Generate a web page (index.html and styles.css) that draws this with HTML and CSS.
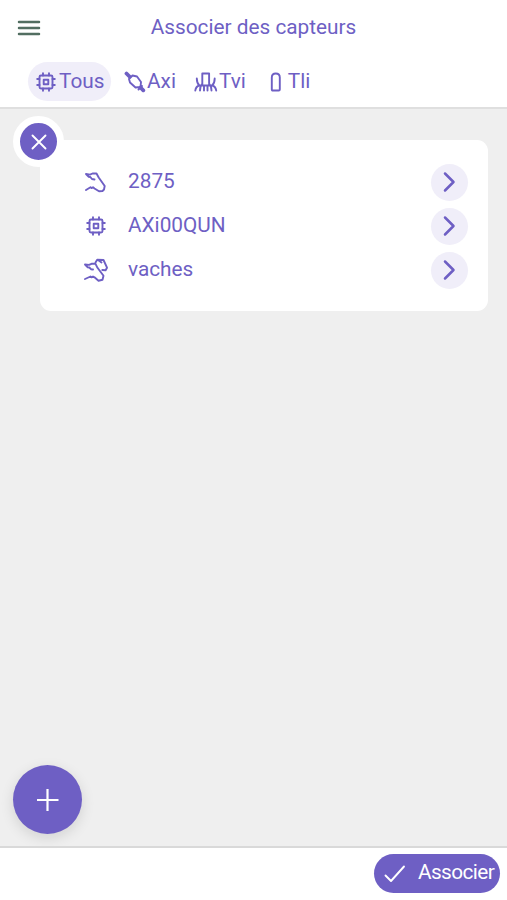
FILE: index.html
```html
<!DOCTYPE html>
<html lang="fr">
<head>
    <meta charset="utf-8">
    <meta name="viewport" content="width=device-width, initial-scale=1">
    <title>Associer des capteurs</title>
    <link rel="stylesheet" href="styles.css">
</head>
<body>
    <!-- shared icons -->
    <svg class="defs" width="0" height="0">
        <symbol id="chip" viewBox="0 0 20 20">
            <rect x="3.5" y="3.5" width="13" height="13" rx="1.5"/>
            <rect x="7.7" y="7.7" width="4.6" height="4.6"/>
            <path d="M7 1.2v2.3M13 1.2v2.3M7 16.5v2.3M13 16.5v2.3M1.2 7h2.3M1.2 13h2.3M16.5 7h2.3M16.5 13h2.3"/>
        </symbol>
        <symbol id="cow" viewBox="0 0 26 26">
            <path d="M3 5l4 .6L9.500 4.500h4l2.200 4 6 8.500-.7 3.500-1.500 1.500-3.500.3-4.500-2.800-1.500-1.200-1.500.8-1-.8L3 21M3 5l2.500 2.700 1.800.3 1.700 2 2.500.5"/>
        </symbol>
        <symbol id="arrow" viewBox="0 0 37 37">
            <path d="M14 9.5l8.500 8.500-8.500 8.500"/>
        </symbol>
    </svg>

    <div class="app">
        <header class="header">
            <div class="title-bar">
                <button class="menu" aria-label="Menu">
                    <svg width="24" height="18" viewBox="0 0 24 18"><path d="M2 3h20M2 9h20M2 15h20"/></svg>
                </button>
                <h1>Associer des capteurs</h1>
            </div>
            <nav class="tabs">
                <a class="tab active">
                    <svg width="20" height="20"><use href="#chip"/></svg>
                    <span>Tous</span>
                </a>
                <a class="tab tab-axi">
                    <svg width="22" height="22" viewBox="0 0 22 22">
                        <path class="thick" d="M2.5 2.5l3 3M16.500 16.500l2.800 2.800"/>
                        <path d="M5 8l3.500-3.500 4.500 1 4 5.500-.5 5-5 .5-5.500-5zM14.500 18.500l3.500-3.500"/>
                    </svg>
                    <span>Axi</span>
                </a>
                <a class="tab tab-tvi">
                    <svg width="24" height="20" viewBox="0 0 24 20">
                        <path d="M8.3 13V1.5h6.8V13M5 13.5h13.5M2.8 6.5q0 4.500 2.500 7-3.500 1-4 5M20.7 6.5q0 4.500-2.500 7 3.500 1 4 5M8.3 11.5Q6 14.5 6 18.5M10 14v4.5M13.5 14v4.5M15.1 11.5q2.4 3 2.4 7"/>
                    </svg>
                    <span>Tvi</span>
                </a>
                <a class="tab tab-tli">
                    <svg width="12" height="20" viewBox="0 0 12 20"><path d="M1.800 17.500V5.500Q1.800 1.500 5.800 1.500t4 4v12q0 1-1 1h-6q-1 0-1-1z"/></svg>
                    <span>Tli</span>
                </a>
            </nav>
        </header>

        <main class="content">
            <section class="card">
                <button class="close" aria-label="Fermer">
                    <svg width="16" height="16" viewBox="0 0 16 16"><path d="M1.5 1.5l13 13M14.5 1.5l-13 13"/></svg>
                </button>
                <div class="row">
                    <svg class="row-icon" width="26" height="26"><use href="#cow"/></svg>
                    <span class="label">2875</span>
                    <button class="next" aria-label="Ouvrir"><svg width="37" height="37"><use href="#arrow"/></svg></button>
                </div>
                <div class="row">
                    <svg class="row-icon" width="20" height="20"><use href="#chip"/></svg>
                    <span class="label">AXi00QUN</span>
                    <button class="next" aria-label="Ouvrir"><svg width="37" height="37"><use href="#arrow"/></svg></button>
                </div>
                <div class="row">
                    <svg class="row-icon" width="26" height="26" viewBox="0 0 26 26">
                        <path d="M2 7.500l4 .4 2.500-1.100h4l2 4 6 8-1 4-4 .9-4-3.400-1.500-.8-1.500.8-1-.8L2 22M2 7.500l2.500 2.700 1.800.3 1.700 1.700 2 .3"/>
                        <path d="M12.500 5.500l1.700-2.700 6.300.2 3.500 7.700-1.400 2.600-3.300-.3M15 3l3.500 2.500"/>
                    </svg>
                    <span class="label">vaches</span>
                    <button class="next" aria-label="Ouvrir"><svg width="37" height="37"><use href="#arrow"/></svg></button>
                </div>
            </section>
            <button class="fab" aria-label="Ajouter">
                <svg width="22" height="22" viewBox="0 0 22 22"><path d="M10.500 0v22M0 11h21.500"/></svg>
            </button>
        </main>

        <footer class="footer">
            <button class="submit">
                <svg width="22" height="18" viewBox="0 0 22 18"><path d="M1.5 10.500l5.500 5.500L20 1.500"/></svg>
                <span>Associer</span>
            </button>
        </footer>
    </div>
</body>
</html>
```

FILE: styles.css
```css
* {
    box-sizing: border-box;
}
body {
    margin: 0;
    font-family: Roboto, sans-serif;
    font-size: 20.8px;
    color: #6e5fc4;
    background: #fff;
}
svg {
    display: block;
    flex: none;
    fill: none;
    stroke: #6e5fc4;
    stroke-width: 1.9;
    stroke-linecap: round;
    stroke-linejoin: round;
}
.defs {
    position: absolute;
}
button {
    padding: 0;
    border: none;
    background: none;
    font: inherit;
    cursor: pointer;
}
.app {
    display: flex;
    flex-direction: column;
    height: 100vh;
}

/* Header */
.header {
    height: 109px;
    border-bottom: 2px solid #dfdfdf;
}
.title-bar {
    display: grid;
    grid-template-columns: 41px 1fr 41px;
    align-items: center;
    height: 55px;
}
.menu {
    padding-left: 17px;
}
.menu svg {
    stroke: #526e61;
    stroke-width: 2.5;
}
h1 {
    margin: 0;
    font-size: 20.8px;
    font-weight: 400;
    line-height: 25px;
    text-align: center;
}
.tabs {
    display: flex;
    padding: 7px 0 0 28px;
}
.tab {
    display: flex;
    align-items: center;
    gap: 3px;
    height: 39px;
    line-height: 25px;
}
.active {
    width: 83px;
    padding-left: 8px;
    border-radius: 20px;
    background: #f0eef9;
}
.tab-axi {
    gap: 1px;
    margin-left: 13px;
}
.tab-axi .thick {
    stroke-width: 3.8;
}
.tab-tvi {
    gap: 1px;
    margin-left: 18px;
}
.tab-tli {
    gap: 6px;
    margin-left: 24px;
}

/* List */
.content {
    display: flex;
    flex: 1;
    flex-direction: column;
    justify-content: space-between;
    padding: 31px 19px 12px 13px;
    background: #efefef;
}
.card {
    position: relative;
    height: 171px;
    margin-left: 27px;
    padding: 20px 20px 0 43px;
    border-radius: 11px;
    background: #fff;
}
.close {
    position: absolute;
    top: -24px;
    left: -27px;
    display: flex;
    align-items: center;
    justify-content: center;
    width: 51px;
    height: 51px;
    border: 7px solid #fff;
    border-radius: 50%;
    background: #6e5fc4;
}
.close svg,
.fab svg,
.submit svg {
    stroke: #fff;
}
.row {
    display: grid;
    grid-template-columns: 26px 1fr 37px;
    column-gap: 19px;
    align-items: center;
    height: 44px;
}
.row-icon {
    justify-self: center;
}
.label {
    line-height: 25px;
    margin-top: -1px;
}
.next {
    border-radius: 50%;
    background: #f0eef9;
}
.next svg {
    stroke-width: 2.5;
}
.fab {
    display: flex;
    align-items: center;
    justify-content: center;
    width: 69px;
    height: 69px;
    border-radius: 50%;
    background: #6e5fc4;
    box-shadow: 0 4px 14px rgba(0, 0, 0, 0.12);
}
.fab svg {
    stroke-width: 2.2;
    stroke-linecap: butt;
}

/* Footer */
.footer {
    display: flex;
    justify-content: flex-end;
    height: 54px;
    padding: 6px 7px 0 0;
    border-top: 2px solid #d9d9d9;
}
.submit {
    display: flex;
    align-items: center;
    gap: 12px;
    width: 126px;
    height: 39px;
    padding-left: 10px;
    border-radius: 20px;
    background: #6e5fc4;
    color: #fff;
}
.submit span {
    margin-top: -3px;
    letter-spacing: -0.6px;
}
```
